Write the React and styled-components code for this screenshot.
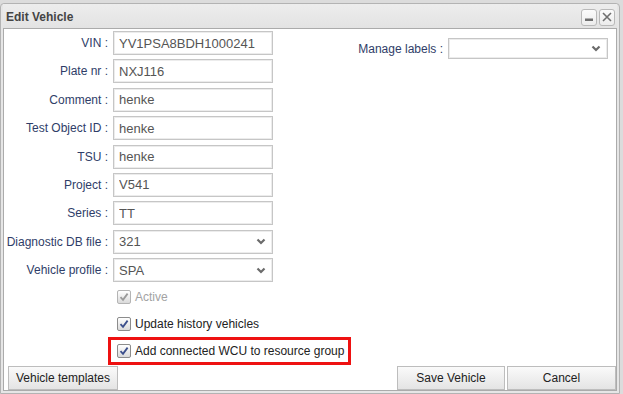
import React from "react";
import styled, { createGlobalStyle } from "styled-components";

const GlobalStyle = createGlobalStyle`
  html, body { margin: 0; padding: 0; }
  body {
    background: #dcdcdc;
    font-family: "Liberation Sans", Arial, sans-serif;
    width: 623px;
    height: 394px;
    overflow: hidden;
  }
`;

const Dialog = styled.div`
  margin-top: 3px;
  width: 620px;
  box-sizing: border-box;
  border: 1px solid #b3b3b3;
  border-radius: 4px 4px 0 0;
  background: #e6e6e6;
  padding: 0 2px 2px 2px;
`;

const TitleBar = styled.div`
  height: 24px;
  display: flex;
  align-items: center;
  justify-content: space-between;
  padding: 0 2px 0 3px;
  background: linear-gradient(#ededed, #e3e3e3);
`;

const Title = styled.div`
  font-size: 12px;
  font-weight: bold;
  color: #444;
  margin-top: 1px;
`;

const TitleButtons = styled.div`
  display: flex;
  gap: 2px;
  margin-top: 2px;
`;

const TitleButton = styled.div`
  width: 14px;
  height: 15px;
  border: 1px solid #b9b9b9;
  border-radius: 3px;
  background: linear-gradient(#fbfbfb, #ececec);
  display: flex;
  align-items: center;
  justify-content: center;
`;

const Content = styled.div`
  height: 363px;
  box-sizing: border-box;
  border: 1px solid #ababab;
  background: #fff;
  display: flex;
  flex-direction: column;
`;

const FormArea = styled.div`
  flex: 1;
  display: flex;
  justify-content: space-between;
  padding-top: 2px;
`;

const LeftCol = styled.div`
  display: flex;
  flex-direction: column;
`;

const FieldGrid = styled.div`
  display: grid;
  grid-template-columns: 104px 160px;
  column-gap: 5px;
  row-gap: 4.4px;
  align-items: center;
`;

const Label = styled.label`
  font-size: 12px;
  color: #2f3d68;
  text-align: right;
  white-space: nowrap;
`;

const boxBase = `
  height: 24px;
  box-sizing: border-box;
  border: 1px solid #c6c6c6;
  box-shadow: inset 0 0 0 1px #ececec;
  background: #fff;
  font-family: "Liberation Sans", Arial, sans-serif;
  font-size: 13px;
  color: #555;
  padding: 0 5px;
`;

const TextInput = styled.input`
  ${boxBase}
  width: 160px;
  outline: none;
  margin: 0;
`;

const SelectBox = styled.div`
  ${boxBase}
  width: ${(p) => p.$width || 160}px;
  height: ${(p) => p.$height || 24}px;
  display: flex;
  align-items: center;
  justify-content: space-between;
  padding-right: 6px;
`;

const Chevron = () => (
  <svg width="10" height="7" viewBox="0 0 10 7">
    <path d="M1.5 1.5 L5 5 L8.5 1.5" fill="none" stroke="#6b6b6b" strokeWidth="2.2" />
  </svg>
);

const CheckList = styled.div`
  margin-top: 1.5px;
  margin-left: 104px;
  display: flex;
  flex-direction: column;
  align-items: flex-start;
`;

const CheckRow = styled.div`
  height: 27px;
  box-sizing: border-box;
  display: flex;
  align-items: center;
  gap: 4px;
  padding-left: 9px;
  font-size: 12px;
  color: ${(p) => (p.$disabled ? "#a3a3a3" : "#222")};
`;

const HighlightRow = styled(CheckRow)`
  height: 28px;
  margin-top: -0.5px;
  border: 3px solid #ee1111;
  padding-left: 6px;
  padding-right: 4px;
`;

const Box = styled.span`
  width: 14px;
  height: 14px;
  box-sizing: border-box;
  border: 1px solid ${(p) => (p.$disabled ? "#b4b4b4" : "#8c8c8c")};
  border-radius: 2px;
  background: linear-gradient(#ffffff, #dadada);
  display: flex;
  align-items: center;
  justify-content: center;
`;

const Check = ({ disabled }) => (
  <Box $disabled={disabled}>
    <svg width="10" height="10" viewBox="0 0 10 10">
      <path
        d="M1.5 5.2 L4 7.8 L8.6 1.6"
        fill="none"
        stroke={disabled ? "#9a9a9a" : "#3c4f8c"}
        strokeWidth="1.8"
      />
    </svg>
  </Box>
);

const RightCol = styled.div`
  margin-top: 7px;
  margin-right: 8px;
  display: flex;
  align-items: center;
  gap: 5px;
  align-self: flex-start;
`;

const ButtonBar = styled.div`
  height: 24px;
  display: flex;
  justify-content: space-between;
  padding: 0 0 0 4px;
`;

const RightButtons = styled.div`
  display: flex;
  gap: 2px;
`;

const Button = styled.button`
  width: ${(p) => p.$width}px;
  height: 24px;
  margin: 0;
  box-sizing: border-box;
  border: 1px solid #bdbdbd;
  background: linear-gradient(#fafafa, #e4e4e4);
  font-family: "Liberation Sans", Arial, sans-serif;
  font-size: 12px;
  color: #222;
  padding: 0;
`;

const fields = [
  ["VIN", "YV1PSA8BDH1000241"],
  ["Plate nr", "NXJ116"],
  ["Comment", "henke"],
  ["Test Object ID", "henke"],
  ["TSU", "henke"],
  ["Project", "V541"],
  ["Series", "TT"],
];

export default function App() {
  return (
    <>
      <GlobalStyle />
      <Dialog>
        <TitleBar>
          <Title>Edit Vehicle</Title>
          <TitleButtons>
            <TitleButton>
              <svg width="10" height="10" viewBox="0 0 10 10">
                <rect x="1" y="6.5" width="8" height="2.5" fill="#6f6f6f" />
              </svg>
            </TitleButton>
            <TitleButton>
              <svg width="10" height="10" viewBox="0 0 10 10">
                <path d="M1 1 L9 9 M9 1 L1 9" stroke="#6f6f6f" strokeWidth="1.6" />
              </svg>
            </TitleButton>
          </TitleButtons>
        </TitleBar>
        <Content>
          <FormArea>
            <LeftCol>
              <FieldGrid>
                {fields.map(([l, v]) => (
                  <React.Fragment key={l}>
                    <Label>{l} :</Label>
                    <TextInput defaultValue={v} />
                  </React.Fragment>
                ))}
                <Label>Diagnostic DB file :</Label>
                <SelectBox>
                  <span>321</span>
                  <Chevron />
                </SelectBox>
                <Label>Vehicle profile :</Label>
                <SelectBox>
                  <span>SPA</span>
                  <Chevron />
                </SelectBox>
              </FieldGrid>
              <CheckList>
                <CheckRow $disabled>
                  <Check disabled />
                  <span>Active</span>
                </CheckRow>
                <CheckRow>
                  <Check />
                  <span>Update history vehicles</span>
                </CheckRow>
                <HighlightRow>
                  <Check />
                  <span>Add connected WCU to resource group</span>
                </HighlightRow>
              </CheckList>
            </LeftCol>
            <RightCol>
              <Label>Manage labels :</Label>
              <SelectBox $width={160} $height={21}>
                <span />
                <Chevron />
              </SelectBox>
            </RightCol>
          </FormArea>
          <ButtonBar>
            <Button $width={110}>Vehicle templates</Button>
            <RightButtons>
              <Button $width={108}>Save Vehicle</Button>
              <Button $width={109}>Cancel</Button>
            </RightButtons>
          </ButtonBar>
        </Content>
      </Dialog>
    </>
  );
}
